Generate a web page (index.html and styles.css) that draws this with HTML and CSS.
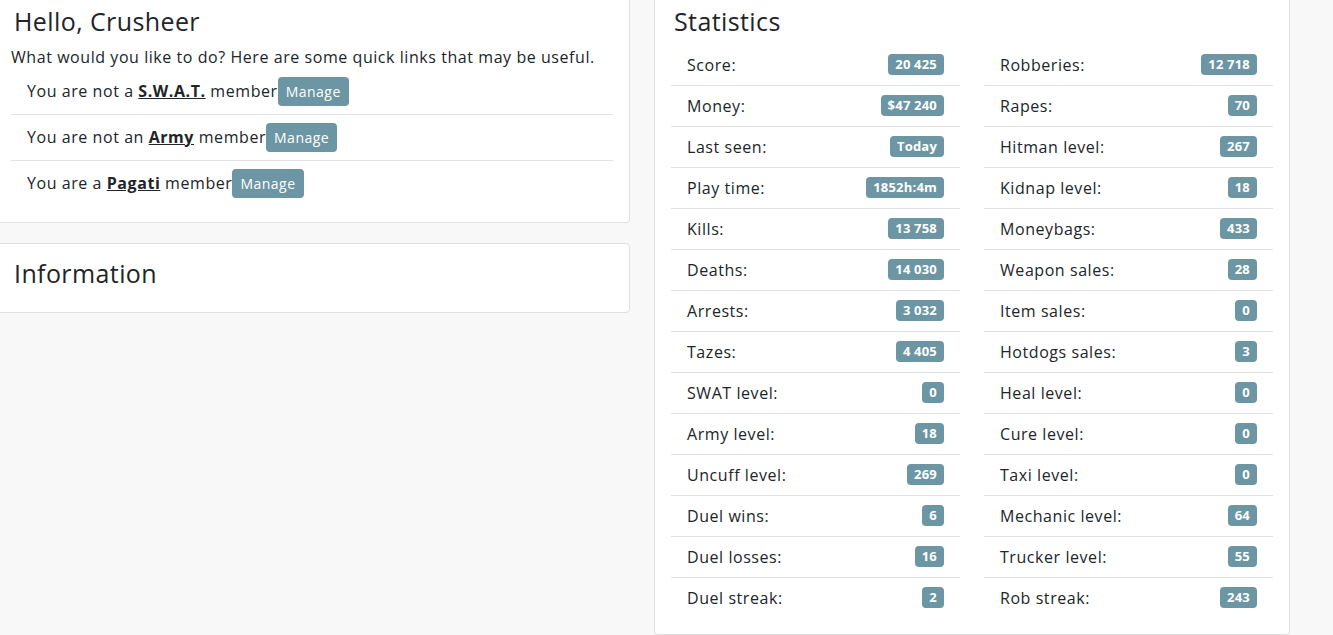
FILE: index.html
```html
<!DOCTYPE html>
<html>
<head>
	<meta charset="utf-8">
	<title>Dashboard</title>
	<link rel="stylesheet" href="styles.css">
</head>
<body>
	<div class="page">
		<!-- left side: greeting + info -->
		<div class="col">
			<div class="card">
				<h3>Hello, Crusheer</h3>
				<p>What would you like to do? Here are some quick links that may be useful.</p>
				<ul class="links">
					<li>You are not a <a href="#">S.W.A.T.</a> member<button class="btn">Manage</button></li>
					<li>You are not an <a href="#">Army</a> member<button class="btn">Manage</button></li>
					<li>You are a <a href="#">Pagati</a> member<button class="btn">Manage</button></li>
				</ul>
			</div>
			<div class="card">
				<h3>Information</h3>
			</div>
		</div>

		<!-- right side: player stats -->
		<div class="col">
			<div class="card">
				<h3>Statistics</h3>
				<div class="stats">
					<ul>
						<li>Score:<span class="badge">20 425</span></li>
						<li>Money:<span class="badge">$47 240</span></li>
						<li>Last seen:<span class="badge">Today</span></li>
						<li>Play time:<span class="badge">1852h:4m</span></li>
						<li>Kills:<span class="badge">13 758</span></li>
						<li>Deaths:<span class="badge">14 030</span></li>
						<li>Arrests:<span class="badge">3 032</span></li>
						<li>Tazes:<span class="badge">4 405</span></li>
						<li>SWAT level:<span class="badge">0</span></li>
						<li>Army level:<span class="badge">18</span></li>
						<li>Uncuff level:<span class="badge">269</span></li>
						<li>Duel wins:<span class="badge">6</span></li>
						<li>Duel losses:<span class="badge">16</span></li>
						<li>Duel streak:<span class="badge">2</span></li>
					</ul>
					<ul>
						<li>Robberies:<span class="badge">12 718</span></li>
						<li>Rapes:<span class="badge">70</span></li>
						<li>Hitman level:<span class="badge">267</span></li>
						<li>Kidnap level:<span class="badge">18</span></li>
						<li>Moneybags:<span class="badge">433</span></li>
						<li>Weapon sales:<span class="badge">28</span></li>
						<li>Item sales:<span class="badge">0</span></li>
						<li>Hotdogs sales:<span class="badge">3</span></li>
						<li>Heal level:<span class="badge">0</span></li>
						<li>Cure level:<span class="badge">0</span></li>
						<li>Taxi level:<span class="badge">0</span></li>
						<li>Mechanic level:<span class="badge">64</span></li>
						<li>Trucker level:<span class="badge">55</span></li>
						<li>Rob streak:<span class="badge">243</span></li>
					</ul>
				</div>
			</div>
		</div>
	</div>
</body>
</html>
```

FILE: styles.css
```css
*{
	margin: 0;
	padding: 0;
	box-sizing: border-box;
}
body{
	background-color: #f8f8f8;
	color: #212529;
	font-family: "Open Sans", sans-serif;
	font-size: 16px;
	letter-spacing: .56px;
	line-height: 1.5;
	overflow: hidden;
}
.page{
	display: grid;
	grid-template-columns: 636px 636px;
	column-gap: 24px;
	align-items: start;
	margin: -9px 0 0 -6px;
}
.card{
	background: white;
	border: 1px solid #dfdfdf;
	border-radius: 4px;
	padding: 16px;
	margin-bottom: 20px;
}
h3{
	font-size: 25px;
	font-weight: 500;
	line-height: 1.1;
	margin-bottom: 9px;
	padding-left: 3px;
	letter-spacing: .4px;
}
.links{
	list-style: none;
}
.links li{
	padding: 8px 16px;
	border-bottom: 1px solid #dee2e6;
}
.links li:last-child{
	border-bottom: none;
}
.links a{
	color: #212529;
	font-weight: 700;
	text-decoration: underline;
}
.btn{
	font-family: inherit;
	font-size: 14px;
	letter-spacing: .5px;
	line-height: 1.5;
	color: white;
	background: #6c96a4;
	border: none;
	border-radius: 4px;
	padding: 4px 8px;
}
.stats{
	display: grid;
	grid-template-columns: 1fr 1fr;
	column-gap: 24px;
}
.stats ul{
	list-style: none;
}
.stats li{
	display: flex;
	justify-content: space-between;
	align-items: center;
	padding: 8px 16px;
	border-bottom: 1px solid #dee2e6;
}
.stats li:last-child{
	border-bottom: none;
}
.badge{
	font-size: 13px;
	font-weight: 700;
	line-height: 1;
	letter-spacing: .2px;
	color: white;
	background: #6c96a4;
	border-radius: 4px;
	padding: 4px 7px;
}
```
